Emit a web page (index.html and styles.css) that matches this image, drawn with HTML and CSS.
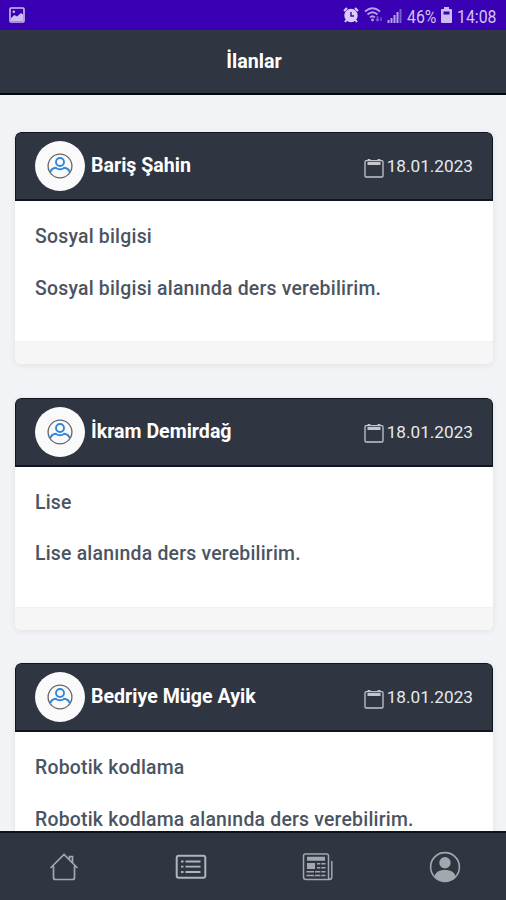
FILE: index.html
```html
<!DOCTYPE html>
<html lang="tr">
	<head>
		<meta charset="UTF-8">
		<title>İlanlar</title>
		<link rel="stylesheet" href="styles.css">
	</head>
	<body>
		<!-- icons used more than once -->
		<svg class="defs">
			<symbol id="person" viewBox="0 0 26 26">
				<circle cx="13" cy="13" r="11.9" fill="none" stroke="#62666b" stroke-width="1.3"/>
				<g fill="none" stroke="#2f86dc" stroke-width="1.9">
					<circle cx="13" cy="9" r="4"/>
					<path d="M3.300 19c1-2.500 3-4 5.700-4.200 2 2 6 2 8 0 2.700.2 4.700 1.700 5.700 4.200"/>
				</g>
			</symbol>
			<symbol id="calendar" viewBox="0 0 20 20">
				<rect x="1" y="2.700" width="18" height="16.300" rx="1.200" fill="none" stroke="#c3c7cd" stroke-width="1.300"/>
				<path d="M3.500 5.500h13M5 1v2M15 1v2" fill="none" stroke="#c3c7cd" stroke-width="2.800"/>
			</symbol>
		</svg>

		<div id="status">
			<svg class="photo" width="16" height="16" viewBox="0 0 16 16">
				<rect x="1" y="1" width="14" height="14" rx="1" fill="none" stroke="#cdbcf1" stroke-width="1.600"/>
				<path d="M2 14v-3l3.500-3 2.500 1.500L12 6l2 1.500V14z" fill="#cdbcf1"/>
				<circle cx="4.800" cy="4.800" r="1.300" fill="#cdbcf1"/>
			</svg>
			<svg class="alarm" width="16" height="16" viewBox="0 0 16 16">
				<circle cx="8" cy="8.500" r="5.200" fill="none" stroke="#d9cdf5" stroke-width="3"/>
				<circle cx="8" cy="8.500" r="5" fill="#d9cdf5"/>
				<path d="M1 4l3-3M15 4l-3-3M3.500 13L2 15M12.500 13l1.500 2" stroke="#d9cdf5" stroke-width="2"/>
				<path d="M8 5v4h3" fill="none" stroke="#3a00b3" stroke-width="1.400"/>
			</svg>
			<svg class="wifi" width="19" height="16" viewBox="0 0 19 16">
				<path d="M1 4.500q7.500-6.500 15 0M3.500 7.500q5-4.500 10 0M6 10.500q2.500-2.500 5 0" fill="none" stroke="#b9a1ea" stroke-width="1.700"/>
				<circle cx="8.500" cy="13" r="1.400" fill="#b9a1ea"/>
				<path d="M13.500 9v4M12 12l1.500 2 1.500-2M17 14v-4" fill="none" stroke="#7f58d3" stroke-width="1.300"/>
			</svg>
			<svg class="signal" width="15" height="15" viewBox="0 0 15 15">
				<path d="M1.500 12v3M4.500 10v5M7.500 7v8M10.500 4v11" stroke="#b9a1ea" stroke-width="2"/>
				<path d="M13.500 1v14" stroke="#7f58d3" stroke-width="2"/>
			</svg>
			<span class="percent">46%</span>
			<svg class="battery" width="11" height="16" viewBox="0 0 11 16">
				<path d="M3 0h5v2h2q1 0 1 1v12q0 1-1 1H1q-1 0-1-1V3q0-1 1-1h2z" fill="#cdbcf1"/>
				<path d="M2.500 4.500h6v3h-6z" fill="#3a00b3"/>
			</svg>
			<span class="clock">14:08</span>
		</div>

		<div id="header">İlanlar</div>

		<div id="list">
			<div class="card">
				<div class="card-top">
					<span class="avatar"><svg><use href="#person"/></svg></span>
					<span class="name">Bariş Şahin</span>
					<svg class="cal"><use href="#calendar"/></svg>
					<span class="date">18.01.2023</span>
				</div>
				<div class="card-body">
					<p>Sosyal bilgisi</p>
					<p>Sosyal bilgisi alanında ders verebilirim.</p>
				</div>
				<div class="card-foot"></div>
			</div>
			<div class="card">
				<div class="card-top">
					<span class="avatar"><svg><use href="#person"/></svg></span>
					<span class="name">İkram Demirdağ</span>
					<svg class="cal"><use href="#calendar"/></svg>
					<span class="date">18.01.2023</span>
				</div>
				<div class="card-body">
					<p>Lise</p>
					<p>Lise alanında ders verebilirim.</p>
				</div>
				<div class="card-foot"></div>
			</div>
			<div class="card">
				<div class="card-top">
					<span class="avatar"><svg><use href="#person"/></svg></span>
					<span class="name">Bedriye Müge Ayik</span>
					<svg class="cal"><use href="#calendar"/></svg>
					<span class="date">18.01.2023</span>
				</div>
				<div class="card-body">
					<p>Robotik kodlama</p>
					<p>Robotik kodlama alanında ders verebilirim.</p>
				</div>
				<div class="card-foot"></div>
			</div>
		</div>

		<div id="nav">
			<a><svg width="32" height="32" viewBox="0 0 32 32">
				<path d="M2.500 17L16 3.500 29.500 17M5.500 15v11.500q0 2 2 2h17q2 0 2-2V15M21.500 8V5.500h3V12" fill="none" stroke="#a3a8af" stroke-width="1.700"/>
			</svg></a>
			<a><svg width="32" height="32" viewBox="0 0 32 32">
				<rect x="1.700" y="4.700" width="28.600" height="22" rx="2" fill="none" stroke="#b0b5bc" stroke-width="2"/>
				<path d="M10.500 10.500h15M10.500 15.700h15M10.500 21h15M6 10.500h2.500M6 15.700h2.500M6 21h2.500" stroke="#b0b5bc" stroke-width="1.800"/>
			</svg></a>
			<a><svg width="32" height="32" viewBox="0 0 32 32">
				<path d="M29.800 10v16q0 2.500-2.500 2.500H4q-2.500 0-2.500-2.500V5Q1.500 3 3.500 3h21q2 0 2 2v21q0 2.500 2 2.500" fill="none" stroke="#a3a8af" stroke-width="1.500"/>
				<path d="M5 5.700h18v4H5zM5 12h8v6H5z" fill="#a3a8af"/>
				<path d="M15 12.800h8.500M15 16.800h8.500M4.500 20.800h19M4.500 24.500h19" stroke="#a3a8af" stroke-width="1.600"/>
				<path d="M18.800 11v14.500M12.500 20v5" stroke="#2f3541" stroke-width="1"/>
			</svg></a>
			<a><svg width="32" height="32" viewBox="0 0 32 32">
				<circle cx="16" cy="16" r="14.400" fill="none" stroke="#a3a8af" stroke-width="1.600"/>
				<circle cx="16" cy="11.700" r="5.700" fill="#a3a8af"/>
				<path d="M5.500 25C7 20.500 11 19 16 19s9 1.500 10.500 6Q22.500 30.500 16 30.500T5.500 25z" fill="#a3a8af"/>
			</svg></a>
		</div>
	</body>
</html>
```
FILE: styles.css
```css
* {
	margin: 0;
	padding: 0;
	box-sizing: border-box;
}

body {
	display: flex;
	flex-direction: column;
	height: 900px;
	overflow: hidden;
	background-color: #f1f3f6;
	font-family: Roboto, sans-serif;
}

.defs {
	display: none;
}

#status {
	display: flex;
	flex: none;
	align-items: center;
	height: 30px;
	padding-left: 9px;
	background-color: #3a00b3;
	color: #d1c3f3;
	font-size: 18px;
}

.alarm {
	margin-left: 318px;
}

.wifi {
	margin-left: 5px;
}

.signal {
	margin-left: 4px;
}

.percent,
.clock {
	margin-top: 3px;
	transform: scaleX(0.88);
	transform-origin: left;
}

.percent {
	width: 34px;
	margin-left: 5px;
}

.battery {
	flex: none;
}

.clock {
	margin-left: 5px;
}

#header {
	flex: none;
	height: 65px;
	border-bottom: 2px solid #05070b;
	background-color: #2f3541;
	color: #fff;
	font-size: 19.700px;
	font-weight: bold;
	line-height: 64px;
	text-align: center;
	padding-left: 2px;
}

#list {
	flex: 1;
	min-height: 0;
	padding: 37px 13px 0 15px;
	overflow: hidden;
}

.card {
	height: 232px;
	margin-bottom: 33.700px;
	border-radius: 6px;
	background-color: #fff;
	box-shadow: 0 1px 6px rgba(0, 0, 0, 0.08);
	overflow: hidden;
}

.card-top {
	display: flex;
	align-items: center;
	height: 69px;
	padding: 0 19px 0 20px;
	border: 1px solid #11151f;
	border-bottom-width: 2px;
	border-radius: 6px 6px 0 0;
	background-color: #2f3541;
	color: #fff;
}

.avatar {
	display: flex;
	align-items: center;
	justify-content: center;
	width: 50px;
	height: 50px;
	margin-left: -1px;
	border-radius: 50%;
	background-color: #fafafa;
}

.avatar svg {
	width: 26px;
	height: 26px;
}

.name {
	margin: -1px auto 0 6px;
	font-size: 19.600px;
	font-weight: bold;
}

.cal {
	width: 20px;
	height: 20px;
	margin: 3px 3px 0 0;
}

.date {
	color: #e6e9ec;
	font-size: 17.200px;
}

.card-body {
	height: 140px;
	padding: 22px 20px 0;
	color: #4b5461;
	font-size: 19.400px;
	font-weight: 500;
	letter-spacing: 0.220px;
}

.card-body p {
	height: 51.500px;
	line-height: 27px;
	white-space: nowrap;
}

.card-foot {
	height: 23px;
	border-top: 1px solid #f2f2f2;
	background-color: #f6f6f6;
}

#nav {
	display: flex;
	flex: none;
	align-items: center;
	height: 69px;
	border-top: 2px solid #0d1220;
	background-color: #2f3541;
}

#nav a {
	flex: none;
	width: 127px;
	height: 32px;
	text-align: center;
}
```
